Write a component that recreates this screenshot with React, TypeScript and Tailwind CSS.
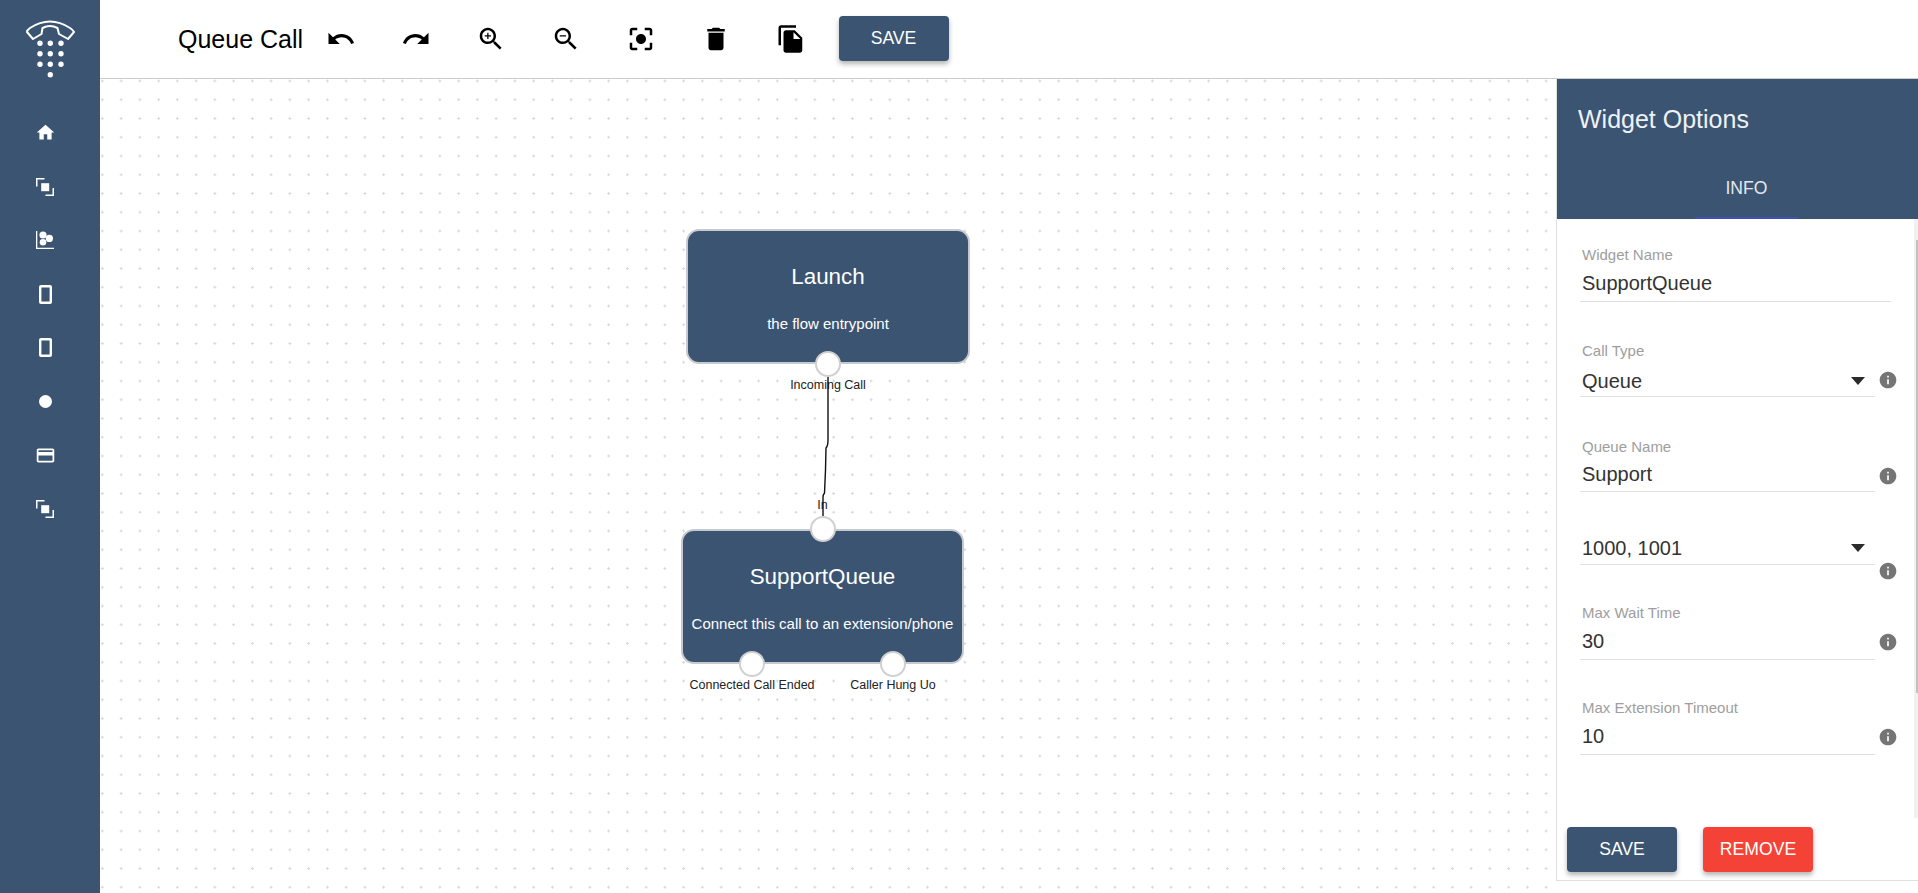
import React from 'react';

const MAGNIFIER =
  'M15.5 14h-.79l-.28-.27C15.41 12.59 16 11.11 16 9.5 16 5.91 13.09 3 9.5 3S3 5.91 3 9.5 5.91 16 9.5 16c1.61 0 3.09-.59 4.23-1.57l.27.28v.79l5 4.99L20.49 19l-4.99-5zm-6 0C7.01 14 5 11.99 5 9.5S7.01 5 9.5 5 14 7.01 14 9.5 11.99 14 9.5 14z';

const toolbarIcons: string[][] = [
  ['M12.5 8c-2.65 0-5.05.99-6.9 2.6L2 7v9h9l-3.62-3.62c1.39-1.16 3.16-1.88 5.12-1.88 3.54 0 6.55 2.31 7.6 5.5l2.37-.78C21.08 11.03 17.15 8 12.5 8z'],
  ['M18.4 10.6C16.55 8.99 14.15 8 11.5 8c-4.65 0-8.58 3.03-9.96 7.22L3.9 16c1.05-3.19 4.05-5.5 7.6-5.5 1.95 0 3.73.72 5.12 1.88L13 16h9V7l-3.6 3.6z'],
  [MAGNIFIER, 'M12 10h-2v2H9v-2H7V9h2V7h1v2h2v1z'],
  [MAGNIFIER, 'M7 9h5v1H7z'],
  ['M12 8c-2.21 0-4 1.79-4 4s1.79 4 4 4 4-1.79 4-4-1.79-4-4-4zm-7 7H3v4c0 1.1.9 2 2 2h4v-2H5v-4zM5 5h4V3H5c-1.1 0-2 .9-2 2v4h2V5zm14-2h-4v2h4v4h2V5c0-1.1-.9-2-2-2zm0 16h-4v2h4c1.1 0 2-.9 2-2v-4h-2v4z'],
  ['M6 19c0 1.1.9 2 2 2h8c1.1 0 2-.9 2-2V7H6v12zM19 4h-3.5l-1-1h-5l-1 1H5v2h14V4z'],
  ['M16 1H4c-1.1 0-2 .9-2 2v14h2V3h12V1zm-1 4l6 6v10c0 1.1-.9 2-2 2H7.99C6.89 23 6 22.1 6 21l.01-14c0-1.1.89-2 1.99-2h7zm-1 7h5.5L14 6.5V12z'],
];

const Logo = () => (
  <svg viewBox="0 0 56 60" className="w-[56px] h-[60px] text-white">
    <path
      d="M5 14 Q5 12 8 10 Q28 -3 48 10 Q51 12 52 14 L46 21 L37 16 L35.5 10 Q28 6 20.5 10 L19.5 16 L11 21 Z"
      fill="none"
      stroke="currentColor"
      strokeWidth="2"
      strokeLinejoin="round"
    />
    {[18, 28.3, 39].map((x) =>
      [25.3, 35.7, 46.3].map((y) => <circle key={`${x}-${y}`} cx={x} cy={y} r="2.7" fill="currentColor" />),
    )}
    <circle cx="28.3" cy="56.7" r="2.7" fill="currentColor" />
  </svg>
);

const CornersIcon = () => (
  <svg viewBox="0 0 18 18" className="w-[18px] h-[18px]" fill="white">
    <path d="M0 0h8.500v1.500H1.500v7H0z" />
    <rect x="5.200" y="5.200" width="8" height="8" />
    <path d="M18 18H9.500v-1.500h7v-6.500H18z" />
  </svg>
);

const ChartIcon = () => (
  <svg viewBox="0 0 18 18" className="w-[18px] h-[18px]" fill="white">
    <path d="M0 0h1.300v16.700H18V18H0z" />
    <circle cx="7" cy="4" r="3.600" />
    <circle cx="13.400" cy="7.400" r="3.600" />
    <circle cx="7" cy="11.200" r="3.300" />
  </svg>
);

const PhoneIcon = () => (
  <svg viewBox="0 0 13 19" className="w-[13px] h-[19px]">
    <rect x="1.200" y="1.200" width="10.600" height="16.600" rx="0.800" fill="none" stroke="white" strokeWidth="2.400" />
  </svg>
);

const CardIcon = () => (
  <svg viewBox="0 0 24 24" className="w-[21px] h-[21px]" fill="white">
    <path d="M20 4H4c-1.110 0-1.990.890-1.990 2L2 18c0 1.110.890 2 2 2h16c1.110 0 2-.890 2-2V6c0-1.110-.890-2-2-2zm0 14H4v-6h16v6zm0-10H4V6h16v2z" />
  </svg>
);

const HomeIcon = () => (
  <svg viewBox="0 0 24 24" className="w-[21px] h-[21px]" fill="white">
    <path d="M10 20v-6h4v6h5v-8h3L12 3 2 12h3v8z" />
  </svg>
);

const sideItems = [
  <HomeIcon />,
  <CornersIcon />,
  <ChartIcon />,
  <PhoneIcon />,
  <PhoneIcon />,
  <div className="w-[13px] h-[13px] rounded-full bg-white" />,
  <CardIcon />,
  <CornersIcon />,
];

const InfoIcon = ({ className }: { className: string }) => (
  <svg viewBox="0 0 24 24" className={`w-[20px] h-[20px] ml-[3px] shrink-0 self-end ${className}`} fill="#757575">
    <path d="M12 2C6.480 2 2 6.480 2 12s4.480 10 10 10 10-4.480 10-10S17.520 2 12 2zm1 15h-2v-6h2v6zm0-8h-2V7h2v2z" />
  </svg>
);

const Caret = () => (
  <svg viewBox="0 0 14 8" className="w-[14px] h-[8px] mr-[10px]" fill="#2b2b2b">
    <path d="M0 0h14L7 8z" />
  </svg>
);

interface FieldProps {
  label?: string;
  value: string;
  select?: boolean;
  className: string;
  valueClass: string;
  infoClass?: string;
}

const Field = ({ label, value, select, className, valueClass, infoClass }: FieldProps) => (
  <div className={`flex ${className}`}>
    <div className={infoClass ? 'w-[295px]' : 'w-[311px]'}>
      {label && <div className="h-[18px] leading-[18px] pl-[2px] text-[15px] text-[#9e9e9e]">{label}</div>}
      <div className={`flex items-center justify-between h-[24px] leading-[24px] pl-[2px] text-[20px] text-[#333] ${valueClass}`}>
        <span>{value}</span>
        {select && <Caret />}
      </div>
      <div className="h-px bg-[#e0e0e0]" />
    </div>
    {infoClass && <InfoIcon className={infoClass} />}
  </div>
);

const Port = ({ className, label, labelClass }: { className: string; label?: string; labelClass?: string }) => (
  <div className={`absolute w-[26px] h-[26px] rounded-full bg-white border-2 border-[#d0d0d0] ${className}`}>
    {label && (
      <span className={`absolute left-1/2 -translate-x-1/2 whitespace-nowrap text-[12.5px] leading-[15px] text-[#222] ${labelClass}`}>
        {label}
      </span>
    )}
  </div>
);

const FlowNode = ({ className, title, sub, children }: { className: string; title: string; sub: string; children: React.ReactNode }) => (
  <div className={`absolute h-[135px] rounded-[13px] bg-[#3a5472] border-2 border-[#c6cace] text-white text-center ${className}`}>
    <div className="pt-[33px] text-[22.4px] leading-[26px]">{title}</div>
    <div className="mt-[25px] text-[15px] leading-[18px] whitespace-nowrap">{sub}</div>
    {children}
  </div>
);

const Button = ({ className, children }: { className: string; children: React.ReactNode }) => (
  <button className={`w-[110px] h-[45px] rounded text-white text-[17.6px] shadow-[0_3px_5px_rgba(0,0,0,0.3)] ${className}`}>{children}</button>
);

export default function App() {
  return (
    <div className="flex h-screen overflow-hidden bg-white font-['Liberation_Sans',sans-serif]">
      {/* Left nav */}
      <aside className="w-[100px] shrink-0 bg-[#3a5472] flex flex-col items-center">
        <div className="mt-[18px]">
          <Logo />
        </div>
        <div className="mt-[28px] pr-[10px] flex flex-col items-center">
          {sideItems.map((item, i) => (
            <div key={i} className="w-[21px] h-[53.75px] flex items-center justify-center">
              {item}
            </div>
          ))}
        </div>
      </aside>

      <div className="flex-1 min-w-0 flex flex-col">
        {/* Top bar */}
        <header className="h-[79px] shrink-0 border-b border-[#cccccc] flex items-center pl-[78px] pb-[1px]">
          <h1 className="text-[25px] leading-[30px] font-normal text-black w-[125.5px] whitespace-nowrap">Queue Call</h1>
          {toolbarIcons.map((paths, i) => (
            <div key={i} className="w-[75px] flex justify-center">
              <svg viewBox="0 0 24 24" className="w-[30px] h-[30px]" fill="black">
                {paths.map((d) => (
                  <path key={d} d={d} />
                ))}
              </svg>
            </div>
          ))}
          <Button className="ml-[10px] bg-[#3a5472]">SAVE</Button>
        </header>

        <div className="flex-1 min-h-0 flex items-start">
          {/* Flow canvas */}
          <main className="relative flex-1 h-full bg-[radial-gradient(circle,#d8d8d8_1px,transparent_1.2px)] bg-[length:18.75px_18.75px] bg-[position:-7px_-7.4px]">
            <FlowNode className="left-[586px] top-[150px] w-[284px]" title="Launch" sub="the flow entrypoint">
              <Port className="left-1/2 -translate-x-1/2 -bottom-[15px]" label="Incoming Call" labelClass="top-[25px]" />
            </FlowNode>
            <FlowNode className="left-[581px] top-[450px] w-[283px]" title="SupportQueue" sub="Connect this call to an extension/phone">
              <Port className="left-1/2 -translate-x-1/2 -top-[15px]" label="In" labelClass="-top-[20px]" />
              <Port className="left-[56px] -bottom-[15px]" label="Connected Call Ended" labelClass="top-[25px]" />
              <Port className="left-[197px] -bottom-[15px]" label="Caller Hung Uo" labelClass="top-[25px]" />
            </FlowNode>
            <svg className="absolute inset-0 w-full h-full pointer-events-none">
              <path
                d="M728 298 L728 361 Q728 367 726 369 L725.500 391 L724.500 414 Q723 416 723 418 L723 437"
                fill="none"
                stroke="#111"
                strokeWidth="1.400"
              />
            </svg>
          </main>

          {/* Options panel */}
          <aside className="w-[362px] shrink-0 h-[802px] border-l border-b border-[#e0e0e0] flex flex-col">
            <div className="h-[140px] shrink-0 bg-[#3a5472] text-white flex flex-col">
              <div className="h-[80px] pl-[21px] pt-[25px] text-[25px] leading-[30px] text-[#eef1f5]">Widget Options</div>
              <div className="h-[60px] flex justify-center pl-[18px]">
                <div className="w-[103px] h-full pt-[1px] flex items-center justify-center border-b-2 border-[#3f51b5] text-[17.6px] text-[#e4e8ee]">INFO</div>
              </div>
            </div>

            <div className="h-[599px] shrink-0 flex">
              <div className="flex-1 pl-[23px] pt-[27px]">
                <Field label="Widget Name" value="SupportQueue" className="" valueClass="mt-[7px] mb-[6px]" />
                <Field label="Call Type" value="Queue" select className="mt-[40px]" valueClass="mt-[9px] mb-[3px]" infoClass="mb-[7px]" />
                <Field label="Queue Name" value="Support" className="mt-[41px]" valueClass="mt-[6px] mb-[5px]" infoClass="mb-[6px]" />
                <Field value="1000, 1001" select className="mt-[44px]" valueClass="mb-[4px]" infoClass="-mb-[16px]" />
                <Field label="Max Wait Time" value="30" className="mt-[39px]" valueClass="mt-[7px] mb-[6px]" infoClass="mb-[8px]" />
                <Field label="Max Extension Timeout" value="10" className="mt-[39px]" valueClass="mt-[7px] mb-[6px]" infoClass="mb-[8px]" />
              </div>
              <div className="w-[4px] shrink-0 bg-[#f1f1f1]">
                <div className="mt-[21px] ml-auto w-[2px] h-[453px] bg-[#c1c1c1]" />
              </div>
            </div>

            <div className="flex gap-[26px] pl-[10px] pt-[9px]">
              <Button className="bg-[#3a5472]">SAVE</Button>
              <Button className="bg-[#f44336]">REMOVE</Button>
            </div>
          </aside>
        </div>
      </div>
    </div>
  );
}
